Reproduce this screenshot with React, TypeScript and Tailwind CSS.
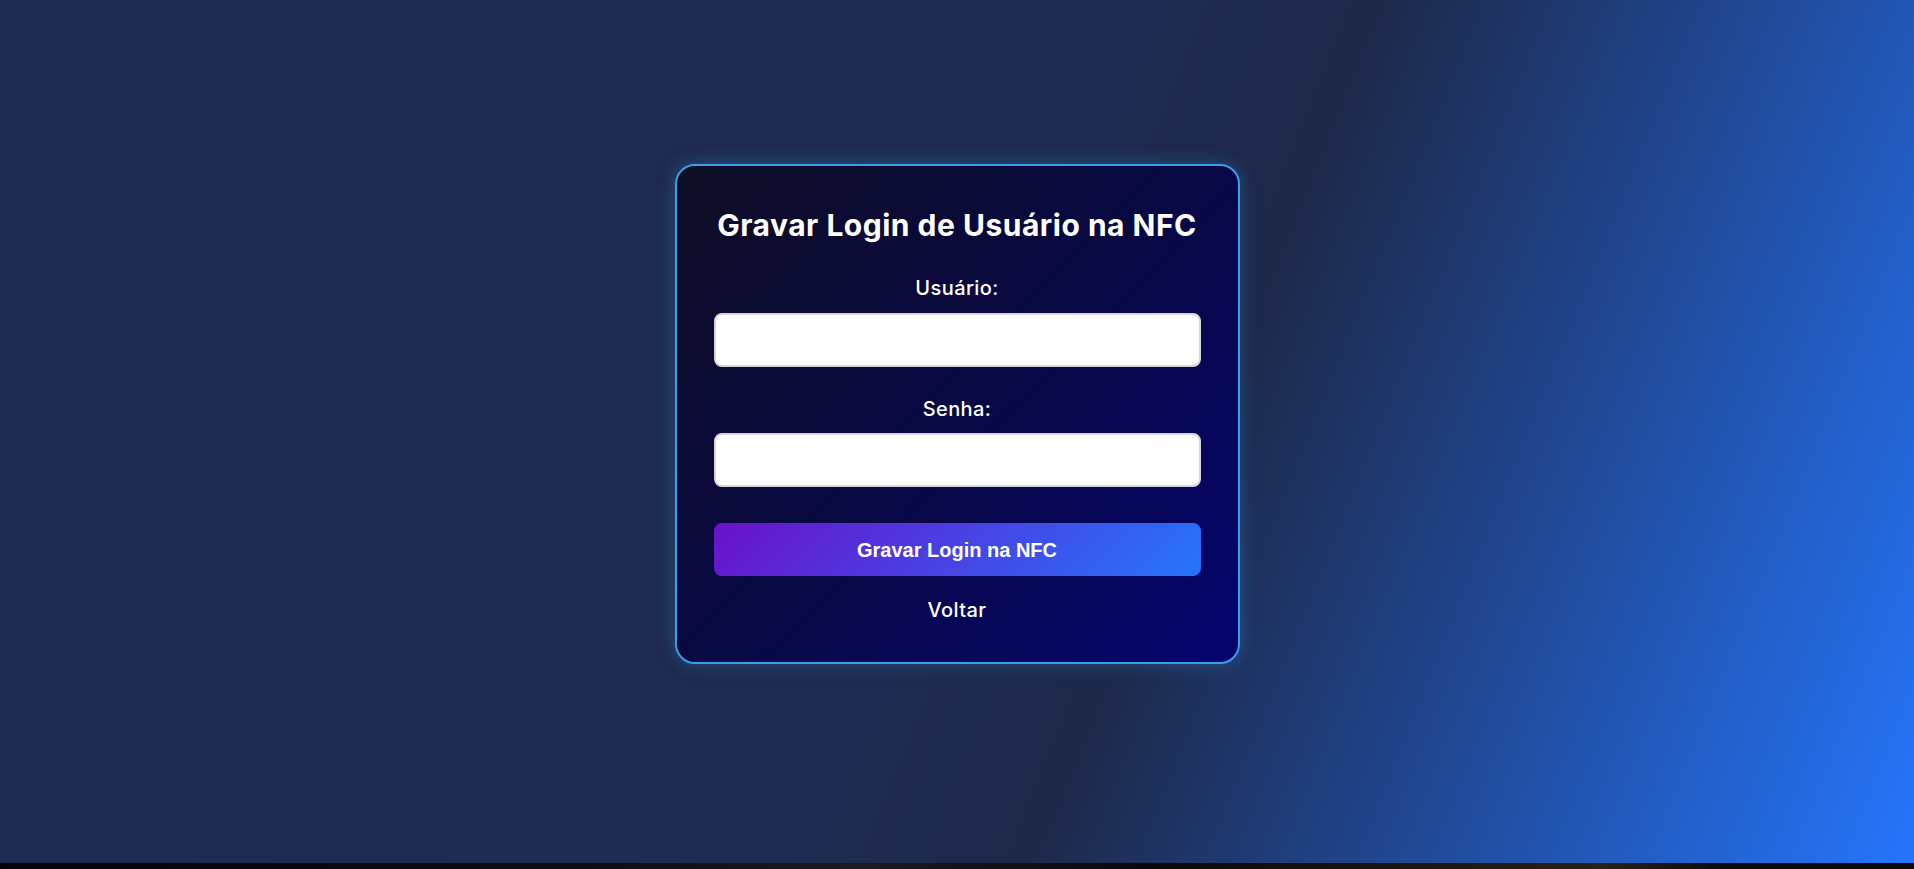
import { useState } from "react";

export default function App() {
  const [usuario, setUsuario] = useState("");
  const [senha, setSenha] = useState("");

  return (
    <div className="min-h-screen w-full flex flex-col font-['Inter','Liberation_Sans',sans-serif]">
      <main className="h-[863px] w-full flex justify-center items-start pt-[164px] bg-[linear-gradient(112deg,#1e2a4f_0%,#1e2a4f_52%,#1d2849_61%,#2575fc_100%)]">
        <div className="w-[565px] rounded-[20px] border-2 border-[#3a9ee8] bg-[linear-gradient(135deg,#0e0d24_0%,#080844_50%,#03036f_100%)] px-[37px] pt-[42px] pb-[38px] shadow-[0_0_18px_rgba(52,152,219,0.35)] flex flex-col items-stretch text-center">
          <h2 className="text-[30px] leading-[34px] font-bold tracking-[0.5px] text-white">
            Gravar Login de Usuário na NFC
          </h2>

          <label className="mt-[33px] text-[20px] leading-[27px] font-medium tracking-[0.4px] text-white">
            Usuário:
          </label>
          <input
            value={usuario}
            onChange={(e) => setUsuario(e.target.value)}
            className="mt-[11px] h-[54px] w-full rounded-[8px] border-2 border-[#d6d6dc] bg-white px-3 text-[16px] outline-none"
          />

          <label className="mt-[29px] text-[20px] leading-[27px] font-medium tracking-[0.4px] text-white">
            Senha:
          </label>
          <input
            type="password"
            value={senha}
            onChange={(e) => setSenha(e.target.value)}
            className="mt-[10px] h-[54px] w-full rounded-[8px] border-2 border-[#d6d6dc] bg-white px-3 text-[16px] outline-none"
          />

          <button className="mt-[36px] h-[53px] w-full rounded-[8px] bg-[linear-gradient(135deg,#6a11cb,#2575fc)] font-['Liberation_Sans',Arial,sans-serif] text-[20px] font-bold text-white">
            Gravar Login na NFC
          </button>

          <a href="#" className="mt-[21px] text-[20px] leading-[27px] font-medium tracking-[0.4px] text-white">
            Voltar
          </a>
        </div>
      </main>
      <div className="h-[6px] w-full bg-[linear-gradient(90deg,#050507_0%,#0c0c10_30%,#1a1a1f_45%,#08080a_60%,#2a2016_84%,#0a0a0c_90%)]" />
    </div>
  );
}
